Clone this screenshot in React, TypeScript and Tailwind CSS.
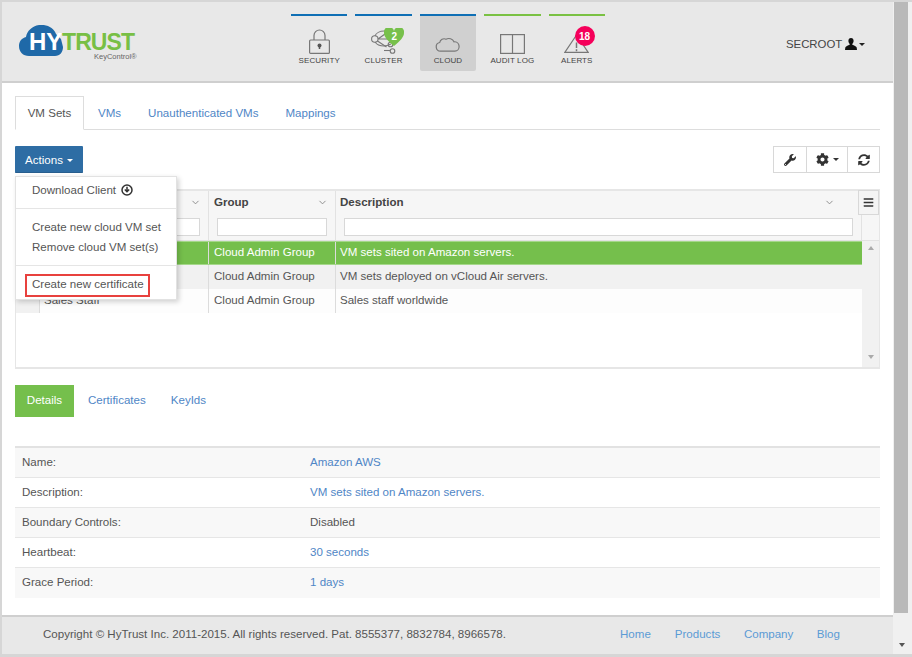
import { ChevronDown } from "lucide-react";
import { FaWrench, FaCog, FaSyncAlt, FaBars } from "react-icons/fa";

const navItems = [
  { label: "SECURITY", line: "bg-[#0f6fb5]", icon: "lock" },
  { label: "CLUSTER", line: "bg-[#0f6fb5]", icon: "cluster" },
  { label: "CLOUD", line: "bg-[#0f6fb5]", icon: "cloud", active: true },
  { label: "AUDIT LOG", line: "bg-[#7ac143]", icon: "book" },
  { label: "ALERTS", line: "bg-[#7ac143]", icon: "alert" },
];

// first two names sit behind the open Actions menu
const rows = [
  { name: "", group: "Cloud Admin Group", desc: "VM sets sited on Amazon servers.", cls: "bg-[#75bf4c] text-white border-y border-[#a5d88a]" },
  { name: "", group: "Cloud Admin Group", desc: "VM sets deployed on vCloud Air servers.", cls: "bg-[#f1f1f1] text-[#555]" },
  { name: "Sales Staff", group: "Cloud Admin Group", desc: "Sales staff worldwide", cls: "bg-[#fdfdfd] text-[#555]" },
];

const details = [
  { label: "Name:", value: "Amazon AWS", link: true },
  { label: "Description:", value: "VM sets sited on Amazon servers.", link: true },
  { label: "Boundary Controls:", value: "Disabled", link: false },
  { label: "Heartbeat:", value: "30 seconds", link: true },
  { label: "Grace Period:", value: "1 days", link: true },
];

function NavIcon({ name }: { name: string }) {
  const stroke = "#777";
  if (name === "lock") {
    return (
      <svg width="21" height="25" viewBox="0 0 21 25" fill="none" stroke={stroke} strokeWidth="1.2">
        <path d="M5 11V6.500a5.500 5.500 0 0 1 11 0V11" />
        <rect x="0.600" y="11" width="19.800" height="13.400" rx="1" />
        <circle cx="10.500" cy="16.500" r="2" fill="#555" stroke="none" />
        <path d="M10.500 17v3" stroke="#555" strokeWidth="1.500" />
      </svg>
    );
  }
  if (name === "cluster") {
    return (
      <svg width="25" height="25" viewBox="0 0 25 25" fill="none" stroke={stroke} strokeWidth="1.1">
        <path d="M4 7c1-3 5-5 9-5 4 0 7 1 9 3M4 13c2 3 5 4 9 4 3 0 5-1 7-2" />
        <circle cx="3.800" cy="10" r="3.200" />
        <path d="M7 10l7-5M7 10h10M6.500 12l9 6" />
        <circle cx="19.500" cy="15.500" r="2.300" />
        <circle cx="21.500" cy="22" r="2.300" />
        <path d="M13 21.500h6" />
      </svg>
    );
  }
  if (name === "cloud") {
    return (
      <svg className="mb-[2px]" width="25" height="16" viewBox="0 0 25 16" fill="none" stroke={stroke} strokeWidth="1.2">
        <path d="M5.500 15.200a4.400 4.400 0 0 1-.8-8.700 4.500 4.500 0 0 1 6.300-3.300A5.800 5.800 0 0 1 19 5.800a4.700 4.700 0 0 1 .8 9.400z" />
      </svg>
    );
  }
  if (name === "book") {
    return (
      <svg width="25" height="20" viewBox="0 0 25 20" fill="none" stroke={stroke} strokeWidth="1.200">
        <rect x="0.600" y="0.600" width="23.800" height="18.800" />
        <path d="M12.500 0.600v18.800" />
      </svg>
    );
  }
  return (
    <svg className="mb-[1px]" width="25" height="19" viewBox="0 0 25 19" fill="none" stroke={stroke} strokeWidth="1.200">
      <path d="M12.500 1L0.800 18.400h23.400z" />
      <path d="M12.500 8.500v5.500M12.500 15.200v2" strokeWidth="1.500" />
    </svg>
  );
}

function Logo() {
  return (
    <div className="relative h-[44px] w-[122px]">
      <svg className="absolute left-0 top-[-2px]" width="44" height="31" viewBox="0 0 44 31" fill="#1f69a8">
        <path d="M10 31C4 31 0 27 0 21C0 16 3 13 7 12C8 6 13 1 20 0C28 -1 35 3 37 9L42 14L44 22C44 27 41 31 36 31Z" />
      </svg>
      <span className="absolute left-[10px] top-[5px] text-[24px] font-bold leading-[20px] text-white">HY</span>
      <span className="absolute left-[43px] top-[5px] text-[23px] font-bold leading-[20px] tracking-[-0.9px] text-[#78bf45]">TRUST</span>
      <span className="absolute left-[75px] top-[25px] text-[7.5px] leading-[10px] text-[#666]">KeyControl®</span>
    </div>
  );
}

function HeadCell({ label, className, pad = "pl-[5px] pr-[6px]" }: { label: string; className: string; pad?: string }) {
  return (
    <div className={`flex flex-col border-r border-[#e2e2e2] ${className}`}>
      <div className={`flex h-[24px] items-center justify-between text-[11.55px] font-bold text-[#444] ${pad}`}>
        <span>{label}</span>
        <ChevronDown size={11} className="mr-[1px] text-[#888]" />
      </div>
      <div className="h-[26px] px-2 pt-[4px]">
        <div className="h-[18px] border border-[#d8d8d8] bg-white" />
      </div>
    </div>
  );
}

export default function App() {
  return (
    <div className="flex h-[657px] w-[912px] overflow-hidden border-2 border-b-[3px] border-r-0 border-[#d6d6d6] bg-white font-['Liberation_Sans',sans-serif] text-[11.55px] text-[#555]">
      <div className="flex w-[891px] flex-col">
        {/* Top bar */}
        <header className="flex h-[81px] shrink-0 items-start border-b-2 border-[#cfcfcf] bg-[#e8e8e8]">
          <div className="w-[289px] pl-[17px] pt-[25px]">
            <Logo />
          </div>
          <nav className="flex gap-2 pt-3">
            {navItems.map((item) => (
              <div key={item.label} className="w-[56.4px]">
                <div className={`h-[2px] ${item.line}`} />
                <div className={`relative flex h-[55px] flex-col items-center justify-end pb-[4px] ${item.active ? "rounded-b-[2px] bg-[#d0d0d0]" : ""}`}>
                  <div className="mb-[1px] flex h-[34px] items-end justify-center">
                    <NavIcon name={item.icon} />
                  </div>
                  <span className="text-[8px] leading-[12px] tracking-[0.1px] text-[#444]">{item.label}</span>
                  {item.icon === "cluster" && (
                    <div className="absolute left-[29px] top-[12px] flex h-[18px] w-[20px] items-center justify-center">
                      <svg className="absolute inset-0" width="20" height="18" viewBox="0 0 20 18" fill="#77c04b">
                        <path d="M10 18C4 13 0 9 0 5a5 5 0 0 1 10-2 5 5 0 0 1 10 2c0 4-4 8-10 13z" />
                      </svg>
                      <span className="relative text-[10px] font-bold leading-none text-white">2</span>
                    </div>
                  )}
                  {item.icon === "alert" && (
                    <span className="absolute left-[26px] top-[10px] flex h-[20px] w-[20px] items-center justify-center rounded-full bg-[#f5005a] text-[10px] font-bold text-white">18</span>
                  )}
                </div>
              </div>
            ))}
          </nav>
          <div className="ml-[181px] flex items-center pt-[35px] text-[11.4px] leading-[14px] text-[#444]">
            <span>SECROOT</span>
            <svg className="ml-[3px]" width="12" height="12" viewBox="0 0 12 12" fill="#111">
              <path d="M6 0C4.300 0 3.400 1.200 3.400 2.800c0 1.300.5 2.500 1.300 3.100v.9C3 7.600.6 8.200.3 9.600L0 12h12l-.3-2.400C11.400 8.200 9 7.600 7.300 6.800v-.9c.8-.6 1.300-1.800 1.300-3.100C8.600 1.200 7.700 0 6 0z" />
            </svg>
            <span className="ml-[2px] h-0 w-0 border-x-[3px] border-t-[3px] border-x-transparent border-t-[#222]" />
          </div>
        </header>

        {/* Main content */}
        <main className="relative flex-1 pl-[13px] pr-[13px] pt-[13px]">
          <div className="flex h-[34px] border-b border-[#ddd]">
            <div className="flex h-[34px] w-[69px] items-center justify-center border border-b-white border-[#ddd] bg-white pt-[2px] text-[#555]">VM Sets</div>
            <div className="ml-[14px] flex items-center pt-[2px] text-[#4f86c6]">VMs</div>
            <div className="ml-[27px] flex items-center pt-[2px] text-[#4f86c6]">Unauthenticated VMs</div>
            <div className="ml-[27px] flex items-center pt-[2px] text-[#4f86c6]">Mappings</div>
          </div>

          <div className="mt-4 flex h-[27px] items-stretch justify-between">
            <button className="flex w-[68px] items-center justify-center rounded-[1px] border-b border-[#285e8e] bg-[#2e6da4] pt-[3px] text-white">
              Actions
              <span className="ml-[4px] h-0 w-0 border-x-[3px] border-t-[3px] border-x-transparent border-t-white" />
            </button>
            <div className="flex border border-[#d8d8d8] text-[#333]">
              <div className="flex w-[33px] items-center justify-center border-r border-[#d8d8d8]"><FaWrench className="text-[12px]" /></div>
              <div className="flex w-[41px] items-center justify-center border-r border-[#d8d8d8]">
                <FaCog className="text-[13px]" />
                <span className="ml-1 h-0 w-0 border-x-[3px] border-t-[3px] border-x-transparent border-t-[#333]" />
              </div>
              <div className="flex w-[31px] items-center justify-center"><FaSyncAlt className="text-[12px]" /></div>
            </div>
          </div>

          {/* Grid */}
          <div className="relative mt-4 h-[180px] border-x border-b-2 border-t-2 border-[#e6e6e6]">
            <div className="flex">
              <div className="min-w-0 flex-1">
                <div className="flex h-[50px] border-b border-[#e2e2e2] bg-[#f6f6f6]">
                  <HeadCell label="" className="w-[193px]" />
                  <HeadCell label="Group" className="w-[127px]" />
                  <HeadCell label="Description" className="flex-1" pad="pl-1 pr-[25px]" />
                </div>
                {rows.map((row, i) => (
                  <div key={i} className={`flex h-[24px] items-center ${row.cls}`}>
                    <div className="h-full w-[24px] shrink-0 border-r border-[#dcdcdc] bg-[#f1f1f1]" />
                    <div className="flex h-full w-[169px] shrink-0 items-center border-r border-[#dcdcdc] pl-1">{row.name}</div>
                    <div className="flex h-full w-[127px] shrink-0 items-center border-r border-[#dcdcdc] pl-[5px]">{row.group}</div>
                    <div className="pl-1">{row.desc}</div>
                  </div>
                ))}
              </div>
              <div className="flex h-[176px] w-[17px] shrink-0 flex-col">
                <div className="h-[50px] border-b border-[#e2e2e2] bg-[#f6f6f6]" />
                <div className="flex flex-1 flex-col items-center justify-between bg-[#f1f1f1] pb-[8px] pt-[5px]">
                  <span className="h-0 w-0 border-x-[3px] border-b-[4px] border-x-transparent border-b-[#aaa]" />
                  <span className="h-0 w-0 border-x-[3px] border-t-[4px] border-x-transparent border-t-[#aaa]" />
                </div>
              </div>
            </div>
            {/* Column menu button */}
            <div className="absolute right-0 top-[-1px] flex h-[25px] w-[21px] items-center justify-center border border-[#d8d8d8] bg-[#f4f4f4] text-[#333]">
              <FaBars className="text-[11px]" />
            </div>
          </div>

          {/* Details tabs */}
          <div className="mt-4 flex h-[32px] items-center">
            <div className="flex h-full w-[59px] items-center justify-center bg-[#75bf4c] text-white">Details</div>
            <div className="ml-[14px] text-[#4f86c6]">Certificates</div>
            <div className="ml-[25px] text-[#4f86c6]">KeyIds</div>
          </div>

          <div className="mt-[29px] border-t-2 border-[#e2e2e2]">
            {details.map((d, i) => (
              <div key={d.label} className={`flex h-[30px] items-center border-b border-[#e6e6e6] pl-[7px] last:border-b-0 ${i % 2 === 0 ? "bg-[#f8f8f8]" : "bg-white"}`}>
                <div className="w-[288px] shrink-0">{d.label}</div>
                <div className={d.link ? "text-[#4f86c6]" : "text-[#555]"}>{d.value}</div>
              </div>
            ))}
          </div>

          {/* Actions menu */}
          <div className="absolute left-[13px] top-[93px] h-[124px] w-[162px] border border-[#e2e2e2] bg-white shadow-[2px_2px_5px_rgba(0,0,0,0.18)]">
            <div className="flex h-[26px] items-center pl-4 pt-[2px]">
              Download Client
              <svg className="mb-[2px] ml-[5px]" width="12" height="12" viewBox="0 0 12 12" fill="none" stroke="#333" strokeWidth="1.500">
                <circle cx="6" cy="6" r="5" />
                <path d="M6 2.800v4.400M3.800 5.500l2.200 2.200 2.200-2.200" />
              </svg>
            </div>
            <div className="mb-[8px] mt-[5px] h-px bg-[#e5e5e5]" />
            <div className="flex h-[20px] items-center pl-4 pt-[2px]">Create new cloud VM set</div>
            <div className="flex h-[20px] items-center pl-4 pt-[2px]">Remove cloud VM set(s)</div>
            <div className="my-[8px] h-px bg-[#e5e5e5]" />
            <div className="ml-[9px] flex h-[23px] w-[125px] items-center border-2 border-[#e8413e] pb-[2px] pl-[5px]">Create new certificate</div>
          </div>
        </main>

        <footer className="flex h-[39px] shrink-0 items-center border-t-2 border-[#cfcfcf] bg-[#e8e8e8] pb-[2px] pl-[41px]">
          <span className="w-[577px] text-[#555]">Copyright © HyTrust Inc. 2011-2015. All rights reserved. Pat. 8555377, 8832784, 8966578.</span>
          <span className="text-[#5b9bd5]">Home</span>
          <span className="ml-[24px] text-[#5b9bd5]">Products</span>
          <span className="ml-[23.5px] text-[#5b9bd5]">Company</span>
          <span className="ml-[23.5px] text-[#5b9bd5]">Blog</span>
        </footer>
      </div>

      {/* Page scrollbar */}
      <div className="flex w-[19px] flex-col bg-[#f0f0f0] pl-px">
        <div className="h-[611px] w-[14px] bg-[#b9b9b9]" />
        <span className="ml-[5px] mt-[30px] h-0 w-0 border-x-[3px] border-t-[4px] border-x-transparent border-t-[#555]" />
      </div>
    </div>
  );
}
